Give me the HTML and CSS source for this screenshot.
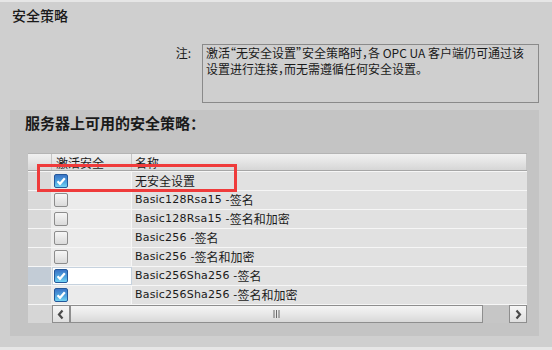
FILE: index.html
```html
<!DOCTYPE html>
<html lang="zh">
<head>
  <meta charset="UTF-8" />
  <title>安全策略</title>
  <link rel="stylesheet" href="styles.css">
</head>
<body>
  <div class="page">
    <div class="title">安全策略</div>

    <div class="note-row">
      <span class="note-label">注:</span>
      <div class="note-box">
        <div class="note-line">激活“无安全设置”安全策略时，各 OPC UA 客户端仍可通过该</div>
        <div class="note-line">设置进行连接，而无需遵循任何安全设置。</div>
      </div>
    </div>

    <div class="panel">
      <div class="panel-title">服务器上可用的安全策略：</div>

      <div class="grid">
        <div class="row head">
          <div class="c0"></div>
          <div class="c1">激活安全</div>
          <div class="c2">名称</div>
        </div>
        <div class="row">
          <div class="c0"></div>
          <div class="c1"><span class="cb on"><svg viewBox="0 0 12 12"><path d="M2.5 6.2 L5 8.8 L9.8 3.2"/></svg></span></div>
          <div class="c2">无安全设置</div>
        </div>
        <div class="row">
          <div class="c0"></div>
          <div class="c1"><span class="cb"></span></div>
          <div class="c2"><span class="lat">Basic128Rsa15 -</span>签名</div>
        </div>
        <div class="row">
          <div class="c0"></div>
          <div class="c1"><span class="cb"></span></div>
          <div class="c2"><span class="lat">Basic128Rsa15 -</span>签名和加密</div>
        </div>
        <div class="row">
          <div class="c0"></div>
          <div class="c1"><span class="cb"></span></div>
          <div class="c2"><span class="lat">Basic256 -</span>签名</div>
        </div>
        <div class="row">
          <div class="c0"></div>
          <div class="c1"><span class="cb"></span></div>
          <div class="c2"><span class="lat">Basic256 -</span>签名和加密</div>
        </div>
        <div class="row selected">
          <div class="c0"></div>
          <div class="c1"><span class="cb on"><svg viewBox="0 0 12 12"><path d="M2.5 6.2 L5 8.8 L9.8 3.2"/></svg></span></div>
          <div class="c2"><span class="lat">Basic256Sha256 -</span>签名</div>
        </div>
        <div class="row">
          <div class="c0"></div>
          <div class="c1"><span class="cb on"><svg viewBox="0 0 12 12"><path d="M2.5 6.2 L5 8.8 L9.8 3.2"/></svg></span></div>
          <div class="c2"><span class="lat">Basic256Sha256 -</span>签名和加密</div>
        </div>

        <div class="scroll">
          <div class="c0"></div>
          <div class="sbtn"><svg viewBox="0 0 16 15"><path d="M9.5 3.5 L6 7.5 L9.5 11.5"/></svg></div>
          <div class="thumb"><svg class="grip" viewBox="0 0 7 8"><path d="M1 0 V8 M3.5 0 V8 M6 0 V8"/></svg></div>
          <div class="gap"></div>
          <div class="sbtn"><svg viewBox="0 0 16 15"><path d="M6.5 3.5 L10 7.5 L6.5 11.5"/></svg></div>
        </div>
      </div>

      <div class="highlight"></div>
    </div>
  </div>
</body>
</html>
```

FILE: styles.css
```css
html, body {
  margin: 0;
  padding: 0;
}
body {
  font-family: "Noto Sans CJK SC", "Noto Sans", sans-serif;
  color: #1a1a1a;
  background-color: #cfcfcf;
}
.page {
  box-sizing: border-box;
  width: 552px;
  height: 350px;
  background-color: #cfcfcf;
  border-top: 2px solid #e6e6e6;
  border-bottom: 3px solid #e6e6e6;
  overflow: hidden;
}
.title {
  padding: 3px 0 0 12px;
  font-size: 14px;
  line-height: 20px;
  font-weight: 500;
}
.note-row {
  display: flex;
  justify-content: flex-end;
  align-items: flex-start;
  margin-top: 19px;
  padding-right: 13px;
}
.note-label {
  font-size: 12px;
  line-height: 15px;
  margin-top: 1px;
  margin-right: 11px;
}
.note-box {
  box-sizing: border-box;
  width: 337px;
  height: 59px;
  border: 1px solid #8a8a8a;
  padding: 0 0 0 3px;
  font-size: 12px;
  white-space: nowrap;
  overflow: hidden;
  font-feature-settings: "halt";
}
.note-line {
  line-height: 16px;
  height: 15.5px;
}
.panel {
  position: relative;
  box-sizing: border-box;
  margin: 7px 0 0 10px;
  width: 529px;
  height: 226px;
  background-color: #c4c4c4;
  padding: 0 12px 0 18px;
}
.panel-title {
  margin-left: -3px;
  padding-top: 3px;
  font-size: 15px;
  line-height: 20px;
  font-weight: bold;
  height: 23px;
  box-sizing: border-box;
}
.grid {
  margin-top: 20px;
  width: 499px;
  font-size: 12px;
}
.row {
  display: grid;
  grid-template-columns: 24px 80px 1fr;
  box-sizing: border-box;
  height: 19px;
  border-top: 1px solid #f6f6f6;
  background-color: #e1e1e1;
}
.row > div {
  display: flex;
  align-items: center;
  box-sizing: border-box;
  line-height: 18px;
}
.row .c0 {
  background-color: #d9d9d9;
  border-right: 1px solid #ececec;
}
.row .c1 {
  background-color: #ebebeb;
  border-right: 1px solid #f6f6f6;
  padding-left: 2px;
}
.row .c2 {
  padding-left: 3px;
  white-space: nowrap;
}
.row.head {
  height: 18px;
  border-top: 1px solid #b4b4b4;
  border-bottom: 1px solid #a6a6a6;
  background: linear-gradient(#f0f0f0, #e4e4e4 50%, #d6d6d6);
}
.row.head > div {
  background: transparent;
  border-right: 1px solid #c4c4c4;
  align-items: flex-end;
  line-height: 15px;
}
.row.head .c1 {
  padding-left: 4px;
}
.row.selected .c0 {
  background-color: #c3ccd6;
}
.row.selected .c1 {
  background-color: #ffffff;
  border: 1px solid #c6d2de;
  padding-left: 1px;
}
.lat {
  font-family: "DejaVu Sans", sans-serif;
  font-size: 11px;
  letter-spacing: 0.2px;
}
.cb {
  display: block;
  box-sizing: border-box;
  width: 14px;
  height: 14px;
  border: 1px solid #8c8c8c;
  border-radius: 2px;
  background: linear-gradient(#f6f6f6, #dadada);
}
.cb.on {
  border-color: #24589a;
  background: linear-gradient(#3a74c6, #4fa6e0 60%, #74d4f4);
}
.cb svg {
  display: block;
  width: 12px;
  height: 12px;
}
.cb svg path {
  fill: none;
  stroke: #ffffff;
  stroke-width: 2.2;
}
.scroll {
  display: flex;
  height: 19px;
  box-sizing: border-box;
  border-top: 1px solid #f6f6f6;
  background-color: #c6c6c6;
}
.scroll .c0 {
  width: 24px;
  background-color: #d6d6d6;
}
.sbtn {
  box-sizing: border-box;
  width: 18px;
  height: 18px;
  border: 1px solid #8e8e8e;
  background: linear-gradient(#f6f6f6, #dedede);
}
.sbtn svg {
  display: block;
  width: 16px;
  height: 15px;
  margin-top: 1px;
}
.sbtn svg path {
  fill: none;
  stroke: #4a4a4a;
  stroke-width: 2.2;
}
.thumb {
  box-sizing: border-box;
  width: 413px;
  height: 18px;
  border: 1px solid #8e8e8e;
  background: linear-gradient(#f4f4f4, #e8e8e8 50%, #d8d8d8);
  display: flex;
  align-items: center;
  justify-content: center;
}
.grip {
  width: 7px;
  height: 8px;
}
.grip path {
  stroke: #6a6a6a;
  stroke-width: 1;
}
.gap {
  flex: 1;
}
.highlight {
  position: absolute;
  left: 27px;
  top: 54px;
  width: 200px;
  height: 28px;
  box-sizing: border-box;
  border: 3px solid #ef3b3b;
}
```
